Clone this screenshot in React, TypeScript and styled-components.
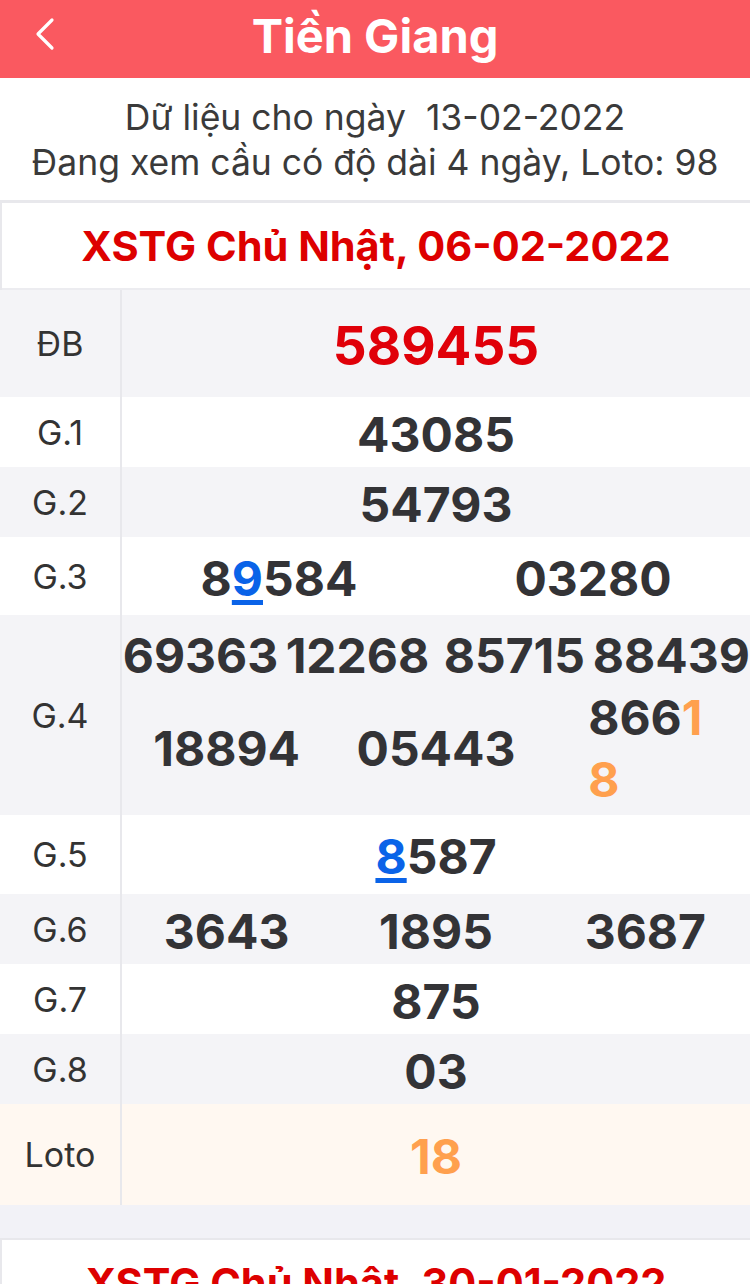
import styled, { createGlobalStyle } from "styled-components";

type Tone = "white" | "gray" | "loto";
type Entry = { v: string; blue?: number[]; orange?: number[]; breakAt?: number };
type RowData = { label: string; tone: Tone; h: number; lines: { cols: number; items: Entry[] }[]; color?: string; size?: number };

const rows: RowData[] = [
  { label: "ĐB", tone: "gray", h: 107, color: "#e00009", size: 53, lines: [{ cols: 1, items: [{ v: "589455" }] }] },
  { label: "G.1", tone: "white", h: 70, lines: [{ cols: 1, items: [{ v: "43085" }] }] },
  { label: "G.2", tone: "gray", h: 70, lines: [{ cols: 1, items: [{ v: "54793" }] }] },
  { label: "G.3", tone: "white", h: 78, lines: [{ cols: 2, items: [{ v: "89584", blue: [1] }, { v: "03280" }] }] },
  {
    label: "G.4",
    tone: "gray",
    h: 200,
    lines: [
      { cols: 4, items: [{ v: "69363" }, { v: "12268" }, { v: "85715" }, { v: "88439" }] },
      { cols: 3, items: [{ v: "18894" }, { v: "05443" }, { v: "86618", orange: [3, 4], breakAt: 4 }] },
    ],
  },
  { label: "G.5", tone: "white", h: 79, lines: [{ cols: 1, items: [{ v: "8587", blue: [0] }] }] },
  { label: "G.6", tone: "gray", h: 70, lines: [{ cols: 3, items: [{ v: "3643" }, { v: "1895" }, { v: "3687" }] }] },
  { label: "G.7", tone: "white", h: 70, lines: [{ cols: 1, items: [{ v: "875" }] }] },
  { label: "G.8", tone: "gray", h: 70, lines: [{ cols: 1, items: [{ v: "03" }] }] },
  { label: "Loto", tone: "loto", h: 101, color: "#ffa04e", lines: [{ cols: 1, items: [{ v: "18" }] }] },
];

function Number({ e }: { e: Entry }) {
  const digits = e.v.split("").map((d, i) => {
    const key = `${d}-${i}`;
    let node = <span key={key}>{d}</span>;
    if (e.blue?.includes(i)) node = <Blue key={key}>{d}</Blue>;
    if (e.orange?.includes(i)) node = <Orange key={key}>{d}</Orange>;
    if (e.breakAt === i) return [<br key={`br-${i}`} />, node];
    return node;
  });
  return <Wrapped>{digits}</Wrapped>;
}

export default function App() {
  return (
    <>
      <GlobalStyle />
      <Header>
        <Back aria-label="back">
          <svg width="22" height="34" viewBox="0 0 22 34" fill="none">
            <polyline points="18,3 4,17 18,31" stroke="#fff" strokeWidth="3.2" strokeLinecap="round" strokeLinejoin="round" />
          </svg>
        </Back>
        <Title>Tiền Giang</Title>
      </Header>

      <Info>
        <InfoLine>Dữ liệu cho ngày&nbsp; 13-02-2022</InfoLine>
        <InfoLine>Đang xem cầu có độ dài 4 ngày, Loto: 98</InfoLine>
      </Info>

      <Card>
        <CardTitle>XSTG Chủ Nhật, 06-02-2022</CardTitle>
        <Table>
          {rows.map((r) => (
            <Row key={r.label} tone={r.tone} h={r.h}>
              <Label>{r.label}</Label>
              <Values color={r.color} size={r.size}>
                {r.lines.map((line, li) => (
                  <Line key={li} cols={line.cols}>
                    {line.items.map((it, ii) => (
                      <Cell key={ii}>
                        <Number e={it} />
                      </Cell>
                    ))}
                  </Line>
                ))}
              </Values>
            </Row>
          ))}
        </Table>
      </Card>

      <Gap />

      <Card>
        <CardTitle>XSTG Chủ Nhật, 30-01-2022</CardTitle>
      </Card>
    </>
  );
}

const GlobalStyle = createGlobalStyle`
  html, body {
    margin: 0;
    background: #f2f2f7;
    font-family: Inter, "Liberation Sans", Arial, sans-serif;
    color: #333;
  }
  #root {
    height: 1284px;
    overflow: hidden;
  }
`;

const Header = styled.div`
  height: 78px;
  background: #fa5960;
  display: flex;
  align-items: center;
  justify-content: center;
  position: relative;
`;

const Back = styled.div`
  position: absolute;
  left: 34px;
  top: 17px;
  display: flex;
`;

const Title = styled.div`
  color: #fff;
  font-size: 47px;
  font-weight: 700;
  margin-top: -8px;
`;

const Info = styled.div`
  background: #fff;
  height: 125px;
  padding-top: 17px;
  box-sizing: border-box;
  text-align: center;
  border-bottom: 3px solid #e8e8ec;
`;

const InfoLine = styled.div`
  font-size: 35.5px;
  line-height: 45px;
  color: #3a3a3a;
`;

const Card = styled.div`
  background: #fff;
  border-left: 2px solid #e8e8ec;
`;

const CardTitle = styled.div`
  height: 87px;
  display: flex;
  align-items: center;
  justify-content: center;
  color: #dd0000;
  font-size: 41.5px;
  font-weight: 700;
  border-bottom: 2px solid #ececf0;
  box-sizing: border-box;
`;

const Table = styled.div`
  display: flex;
  flex-direction: column;
  margin-left: -2px;
`;

const toneBg: Record<Tone, string> = { white: "#ffffff", gray: "#f4f4f7", loto: "#fff8f1" };

const Row = styled.div<{ tone: Tone; h: number }>`
  display: flex;
  height: ${(p) => p.h}px;
  background: ${(p) => toneBg[p.tone]};
`;

const Label = styled.div`
  width: 120px;
  flex-shrink: 0;
  border-right: 2px solid #e8e8ec;
  display: flex;
  align-items: center;
  justify-content: center;
  font-size: 34px;
  color: #333;
`;

const Values = styled.div<{ color?: string; size?: number }>`
  flex: 1;
  display: flex;
  flex-direction: column;
  justify-content: center;
  padding-top: 5px;
  color: ${(p) => p.color || "#333336"};
  font-size: ${(p) => p.size || 48}px;
  font-weight: 700;
  line-height: 62px;
`;

const Line = styled.div<{ cols: number }>`
  display: grid;
  grid-template-columns: repeat(${(p) => p.cols}, 1fr);
  align-items: center;
`;

const Cell = styled.div`
  display: flex;
  justify-content: center;
`;

const Wrapped = styled.span`
  display: inline-block;
  text-align: left;
  white-space: nowrap;
`;

const Blue = styled.span`
  color: #0a63e8;
  text-decoration: underline;
  text-decoration-thickness: 5px;
  text-underline-offset: 4px;
`;

const Orange = styled.span`
  color: #ffa04e;
`;

const Gap = styled.div`
  height: 33px;
  background: #f2f2f7;
  border-bottom: 2px solid #e8e8ec;
`;
